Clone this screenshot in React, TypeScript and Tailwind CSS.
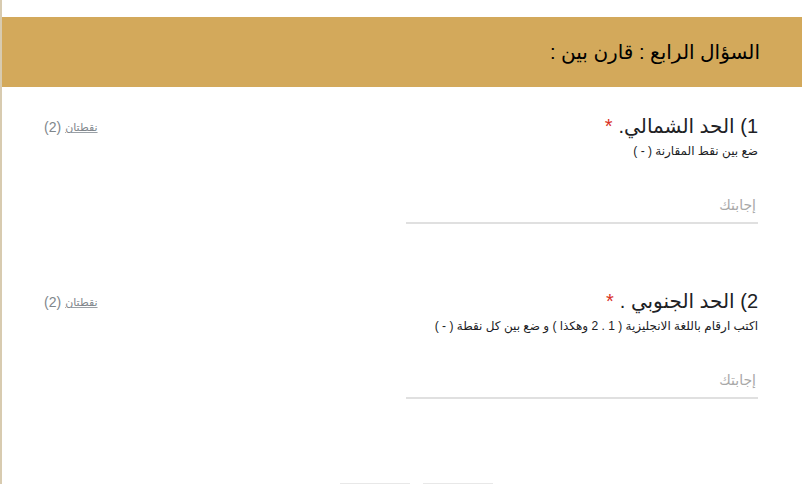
import React from 'react';

const questions = [
  {
    id: 1,
    title: '1) الحد الشمالي.',
    hint: 'ضع بين نقط المقارنة ( - )',
  },
  {
    id: 2,
    title: '2) الحد الجنوبي .',
    hint: 'اكتب ارقام باللغة الانجليزية ( 1 . 2 وهكذا ) و ضع بين كل نقطة ( - )',
  },
];

function Question({ title, hint }: { title: string; hint: string }) {
  return (
    <div className="h-[175px] pt-[27px]">
      <div className="flex items-start justify-between">
        <div>
          <div className="flex items-start text-[20px] leading-[24px] text-[#202124]">
            <span>{title}</span>
            <span className="mr-[6px] text-[#d93025]">*</span>
          </div>
          <div className="mt-[5px] text-[12px] leading-[16px] text-[#202124]">{hint}</div>
        </div>
        <div className="mt-[5px] flex items-center gap-[4px] text-[#80868b]">
          <span className="text-[11px] leading-[14px] underline decoration-[#9aa0a6]">نقطتان</span>
          <span className="text-[14px] leading-[16px]">(2)</span>
        </div>
      </div>
      <div className="mt-[36px] w-[352px]">
        <div className="pr-[2px] text-[14px] leading-[20px] text-[#a8a8a8]">إجابتك</div>
        <div className="mt-[7px] h-[2px] bg-[#e0e0e0]" />
      </div>
    </div>
  );
}

export default function App() {
  return (
    <div
      dir="rtl"
      className="h-[484px] w-full overflow-hidden border-l-2 border-[#d8cbb0] bg-white"
      style={{ fontFamily: '"Liberation Sans", "DejaVu Sans", sans-serif' }}
    >
      <div className="h-[17px]" />
      <div className="flex h-[70px] items-center bg-[#d3a95b] pr-[42px] text-[20px] text-black">
        السؤال الرابع : قارن بين :
      </div>
      <div className="pl-[42px] pr-[44px]">
        {questions.map((q) => (
          <Question key={q.id} title={q.title} hint={q.hint} />
        ))}
        <div className="mt-[46px] flex gap-[13px] pr-[265px]">
          <div className="h-[2px] w-[70px] bg-[#e8e8e8]" />
          <div className="h-[2px] w-[70px] bg-[#e8e8e8]" />
        </div>
      </div>
    </div>
  );
}
